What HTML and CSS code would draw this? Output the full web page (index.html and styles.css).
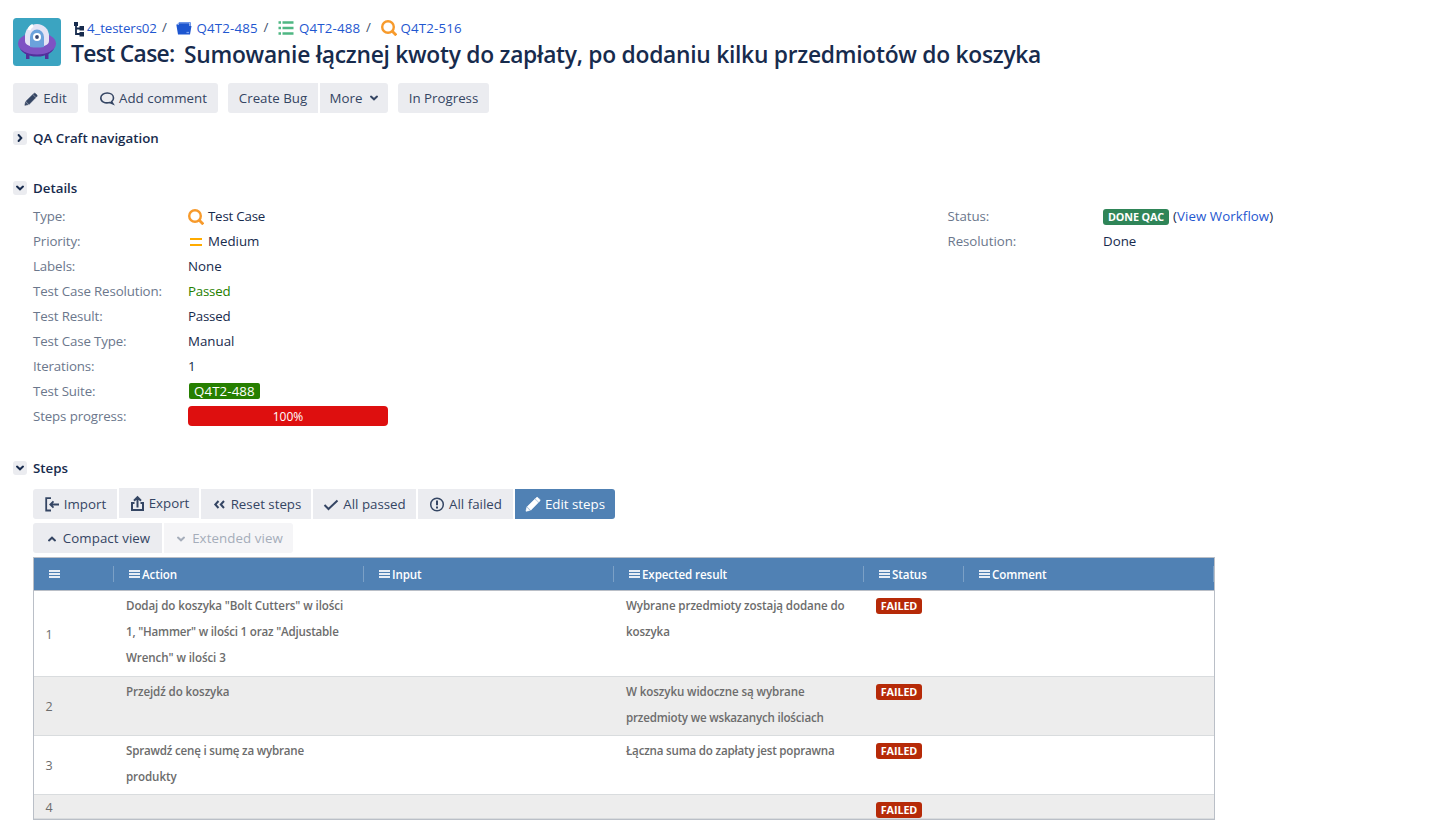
FILE: index.html
```html
<!DOCTYPE html>
<html lang="pl">
<head>
<meta charset="utf-8">
<title>Q4T2-516</title>
<link rel="stylesheet" href="styles.css">
</head>
<body>
<svg class="defs" width="0" height="0">
  <symbol id="search" viewBox="0 0 16 16"><circle cx="7" cy="7" r="5.800" fill="none" stroke="#f79a2b" stroke-width="2.400"/><path d="M11 11l4.300 4.300" stroke="#f79a2b" stroke-width="2.800"/></symbol>
  <symbol id="pencil" viewBox="0 0 16 16"><path d="M1 15.200l.8-3.700 2.900 2.900zM2.200 10.700l7.600-7.500 3.400 3.400-7.500 7.600zM10.300 2.700l1-1q.9-.7 1.700 0l1.700 1.700q.7.900 0 1.700l-1 1z" fill="currentColor" stroke="currentColor" stroke-width=".7"/></symbol>
  <symbol id="down" viewBox="0 0 10 10"><path d="M2 3.600L5 6.300l3-2.700" fill="none" stroke="currentColor" stroke-width="2" stroke-linecap="round"/></symbol>
  <symbol id="bars" viewBox="0 0 11 9"><path d="M0 1h11M0 4h11M0 7h11" stroke="currentColor" stroke-width="2"/></symbol>
</svg>
<header class="top">
  <svg class="avatar" viewBox="0 0 48 48">
    <rect width="48" height="48" rx="3.5" fill="#3ba4c1"/>
    <path d="M13 34h3.500v7H13zM32 34h3.500v7H32z" fill="#52309b"/>
    <ellipse cx="24" cy="28" rx="17.500" ry="10.500" fill="#52309b"/>
    <ellipse cx="24" cy="25.500" rx="19" ry="11" fill="#7e53c3"/>
    <path d="M12 18a12 12 0 0 1 24 0v5c0 8-24 8-24 0z" fill="#e4e3f5"/>
    <path d="M17 29V19a7 7.500 0 0 1 14 0v10q-7 1-14 0z" fill="#6ba2dc"/>
    <path d="M16 12q1-3.500 4-4.500" fill="none" stroke="#fff" stroke-width="3"/>
    <circle cx="24" cy="19" r="4" fill="#fff"/>
    <circle cx="24" cy="19" r="1.900" fill="#3b4770"/>
  </svg>
  <div class="heading">
    <nav class="crumbs">
      <svg class="ic-tree" viewBox="0 0 12 16"><path d="M3 2v11h5M3 7.500h5" fill="none" stroke="#172b4d" stroke-width="1.800"/><path d="M1 1h4v4H1zM6.500 5H11v4.500H6.500zM6.500 11H11v4.500H6.500z" fill="#172b4d"/></svg>
      <a class="c1">4_testers02</a><span class="sep">/</span>
      <svg class="ic-folder" viewBox="0 0 16 16"><path d="M1.500 4.500l1.500-2h11.500V7" fill="none" stroke="#6d96e8"/><path d="M3 3.200h10.500V6H3z" fill="#1d56d0"/><path d="M.3 4.500h5.500L7.300 6h8.200L14 14.500H2z" fill="#1d56d0"/><path d="M10.500 12.500h2.500" stroke="#7fa4f0" stroke-width="1.300"/></svg>
      <a class="c2">Q4T2-485</a><span class="sep">/</span>
      <svg class="ic-list" viewBox="0 0 16 14"><path d="M4.500 1.500h11M4.500 7h11M4.500 12.500h11M.5 1.500H3M.5 7H3M.5 12.500H3" stroke="#4fb783" stroke-width="2.600"/></svg>
      <a class="c3">Q4T2-488</a><span class="sep">/</span>
      <svg class="ic-find"><use href="#search"/></svg>
      <a class="c4">Q4T2-516</a>
    </nav>
    <h1><span class="kind">Test Case:</span><span class="name">Sumowanie łącznej kwoty do zapłaty, po dodaniu kilku przedmiotów do koszyka</span></h1>
  </div>
</header>

<div class="toolbar">
  <button class="btn round edit"><svg class="i14"><use href="#pencil"/></svg><span>Edit</span></button>
  <button class="btn round comment"><svg class="i16" viewBox="0 0 16 16"><path d="M10.800 12.500c-5 1.300-9-.8-9-4.500C1.800 5 4.700 3 8.200 3s6.300 2 6.300 5c0 1.600-.7 2.800-1.900 3.700l1.300 2.100z" fill="none" stroke="currentColor" stroke-width="1.600"/></svg><span>Add comment</span></button>
  <div class="group"><button class="btn first bug"><span>Create Bug</span></button><button class="btn last more"><span>More</span><svg class="i10"><use href="#down"/></svg></button></div>
  <button class="btn round progress-btn"><span>In Progress</span></button>
</div>

<section class="nav-section">
  <h2><i class="toggle"><svg class="i10 right"><use href="#down"/></svg></i><span class="h-nav">QA Craft navigation</span></h2>
</section>

<section class="details">
  <h2><i class="toggle"><svg class="i10"><use href="#down"/></svg></i><span>Details</span></h2>
  <div class="cols">
    <dl class="left">
      <dt>Type:</dt><dd><svg class="i16 gap"><use href="#search"/></svg><span class="tight">Test Case</span></dd>
      <dt>Priority:</dt><dd><svg class="i16 gap" viewBox="0 0 16 16"><path d="M2 5h12M2 11h12" stroke="#ffab00" stroke-width="2"/></svg>Medium</dd>
      <dt>Labels:</dt><dd>None</dd>
      <dt>Test Case Resolution:</dt><dd class="green tight">Passed</dd>
      <dt>Test Result:</dt><dd class="tight">Passed</dd>
      <dt>Test Case Type:</dt><dd>Manual</dd>
      <dt>Iterations:</dt><dd>1</dd>
      <dt>Test Suite:</dt><dd><span class="suite">Q4T2-488</span></dd>
      <dt>Steps progress:</dt><dd><span class="bar">100%</span></dd>
    </dl>
    <dl class="rightcol">
      <dt>Status:</dt><dd><span class="badge done">DONE QAC</span><span class="wf">(<a>View Workflow</a>)</span></dd>
      <dt>Resolution:</dt><dd>Done</dd>
    </dl>
  </div>
</section>

<section class="steps">
  <h2><i class="toggle"><svg class="i10"><use href="#down"/></svg></i><span>Steps</span></h2>
  <div class="step-tools">
    <button class="btn first import"><svg class="i16" viewBox="0 0 16 16"><path d="M7 2.200H2.200v12.300H7M15 8.500H6.500M9.500 5.300L6.300 8.500l3.200 3.200" fill="none" stroke="currentColor" stroke-width="1.800"/></svg><span>Import</span></button>
    <button class="btn export"><svg class="i16" viewBox="0 0 16 16"><path d="M5.500 8H3v7h11V8h-2.500M8.500 12.500V2.500M5 5.700l3.500-3.500L12 5.700" fill="none" stroke="currentColor" stroke-width="2"/></svg><span>Export</span></button>
    <button class="btn reset"><svg class="i16" viewBox="0 0 16 16"><path d="M7.500 5L4.300 8.500 7.500 12M13 5L9.800 8.500 13 12" fill="none" stroke="currentColor" stroke-width="2"/></svg><span>Reset steps</span></button>
    <button class="btn passed"><svg class="i16" viewBox="0 0 16 16"><path d="M1.500 9l4 4 9-8.500" fill="none" stroke="currentColor" stroke-width="2"/></svg><span>All passed</span></button>
    <button class="btn failed"><svg class="i16" viewBox="0 0 16 16"><circle cx="8" cy="8.500" r="6.300" fill="none" stroke="currentColor" stroke-width="1.500"/><path d="M8 4.500v4.800M8 10.500v2" stroke="currentColor" stroke-width="2"/></svg><span>All failed</span></button>
    <button class="btn last primary"><svg class="i16"><use href="#pencil"/></svg><span>Edit steps</span></button>
  </div>
  <div class="view-tools">
    <button class="btn first view"><svg class="i10 up"><use href="#down"/></svg><span>Compact view</span></button>
    <button class="btn last view disabled"><svg class="i10"><use href="#down"/></svg><span>Extended view</span></button>
  </div>
  <div class="grid">
    <div class="row head">
      <div><svg class="bars"><use href="#bars"/></svg></div>
      <div><svg class="bars"><use href="#bars"/></svg><span>Action</span></div>
      <div><svg class="bars"><use href="#bars"/></svg><span>Input</span></div>
      <div><svg class="bars"><use href="#bars"/></svg><span>Expected result</span></div>
      <div><svg class="bars"><use href="#bars"/></svg><span>Status</span></div>
      <div><svg class="bars"><use href="#bars"/></svg><span>Comment</span></div>
    </div>
    <div class="row r1"><div class="num">1</div><div>Dodaj do koszyka "Bolt Cutters" w ilości<br><span class="tight">1, "Hammer" w ilości 1 oraz "Adjustable</span><br>Wrench" w ilości 3</div><div></div><div>Wybrane przedmioty zostają dodane do<br>koszyka</div><div><span class="badge fail">FAILED</span></div><div></div></div>
    <div class="row r2 alt"><div class="num">2</div><div>Przejdź do koszyka</div><div></div><div>W koszyku widoczne są wybrane<br><span class="tight">przedmioty we wskazanych ilościach</span></div><div><span class="badge fail">FAILED</span></div><div></div></div>
    <div class="row r2"><div class="num">3</div><div><span class="tight">Sprawdź cenę i sumę za wybrane</span><br>produkty</div><div></div><div><span class="tight">Łączna suma do zapłaty jest poprawna</span></div><div><span class="badge fail">FAILED</span></div><div></div></div>
    <div class="row r4 alt"><div class="num">4</div><div></div><div></div><div></div><div><span class="badge fail">FAILED</span></div><div></div></div>
  </div>
</section>
</body>
</html>
```
FILE: styles.css
```css
* { box-sizing: border-box; }
body { margin: 0; padding: 18px 13px 0; height: 822px; overflow: hidden; background: #fff; color: #172b4d; font: 13.3px/20px "Open Sans", "Noto Sans", sans-serif; }
.defs { display: block; height: 0; }
svg { flex: none; }
a { color: #1f57d0; }
h1, h2, dl, dd { margin: 0; }
.top { display: flex; height: 48px; }
.avatar { width: 48px; height: 48px; }
.heading { padding-left: 10px; }
.crumbs { display: flex; height: 20px; align-items: center; white-space: nowrap; }
.crumbs a { display: block; width: 62px; letter-spacing: .15px; }
.crumbs a.c1 { width: 70px; letter-spacing: -.12px; }
.sep { width: 6px; margin: -3px 8.5px 0 5px; color: #42526e; }
.crumbs svg { width: 16px; height: 16px; }
.crumbs .ic-tree { width: 12px; margin: 1px 2px 0 2px; }
.crumbs .ic-folder { margin-left: -1px; margin-right: 5px; }
.crumbs .ic-find { margin-right: 4px; }
.crumbs .ic-list { height: 14px; margin-right: 5px; }
h1 { display: flex; height: 32px; font-size: 22.8px; line-height: 32px; font-weight: 600; white-space: nowrap; }
.kind { width: 113px; letter-spacing: -.65px; }
.name { margin-top: 1px; letter-spacing: -.27px; }
.toolbar { display: flex; gap: 10px; margin-top: 17px; }
.btn { display: flex; align-items: center; justify-content: center; gap: 4px; height: 30px; padding: 0; border: 0; background: #ebecf0; color: #344563; font: inherit; line-height: 30px; white-space: nowrap; }
.round { border-radius: 3px; }
.first { border-radius: 3px 0 0 3px; }
.last { border-radius: 0 3px 3px 0; }
.group, .step-tools, .view-tools { display: flex; gap: 2px; }
.i16 { width: 16px; height: 16px; }
.i14 { width: 14px; height: 14px; margin-top: 2px; }
.i10 { width: 10px; height: 10px; }
.edit { width: 65px; gap: 5px; }
.comment { width: 130px; letter-spacing: .05px; }
.bug { width: 90px; }
.more { width: 68px; gap: 7px; }
.more svg { margin-right: -1px; }
.progress-btn { width: 91px; }
h2 { display: flex; align-items: center; gap: 6px; height: 20px; font-size: 13.3px; line-height: 20px; font-weight: 600; }
.toggle { display: flex; align-items: center; justify-content: center; width: 14px; height: 14px; border-radius: 3px; background: #ebecf0; }
.right { transform: rotate(-90deg); }
.up { transform: rotate(180deg); }
.nav-section { margin-top: 15px; }
.details { margin-top: 30px; }
.cols { display: grid; grid-template-columns: 914.5px 1fr; padding: 6px 0 0 20px; }
dl { display: grid; grid-template-columns: 155px 1fr; grid-auto-rows: 25px; align-content: start; line-height: 25px; white-space: nowrap; }
.rightcol { grid-template-columns: 155.5px 1fr; }
dt { color: #6b778c; letter-spacing: -.13px; }
.rightcol dt { letter-spacing: -.05px; }
dd { display: flex; align-items: center; }
.tight { letter-spacing: -.2px; }
.gap { margin-right: 4px; }
.green { color: #267f00; }
.suite { height: 16px; margin: -1px 0 0 1px; padding: 0 5px; border-radius: 2px; background: #267f00; color: #fff; line-height: 16px; letter-spacing: .1px; }
.bar { width: 200px; height: 20px; margin-top: -1px; border-radius: 4px; background: #de0f0f; color: #fff; font-size: 12px; line-height: 21px; text-align: center; }
.badge { display: block; height: 16px; border-radius: 3px; color: #fff; font-size: 10.8px; line-height: 16px; font-weight: 700; letter-spacing: -.12px; text-align: center; white-space: nowrap; }
.done { width: 66px; margin-right: 4px; background: #2f8558; }
.wf { letter-spacing: .07px; }
.fail { width: 46px; margin-top: 5px; background: #b62a08; }
.steps { margin-top: 29px; }
.step-tools { padding: 11px 0 0 20px; }
.view-tools { padding: 4px 0 0 20px; }
.import { width: 84px; }
.export { width: 80px; margin-top: -1px; }
.reset { width: 110px; }
.passed { width: 103px; }
.failed { width: 95px; }
.primary { width: 100px; background: #5081b4; color: #fff; }
.view { width: 129px; gap: 6px; padding-left: 2px; letter-spacing: .08px; }
.view svg { margin-top: 1px; }
.disabled { background: #f5f5f7; color: #a5adba; }
.grid { width: 1182px; margin: 4px 0 0 20px; border: 1px solid #babfc7; color: #6c6c6c; font-size: 11.6px; font-weight: 600; line-height: 26px; letter-spacing: -.1px; }
.row { display: grid; grid-template-columns: 80px 250px 250px 250px 100px 250px; border-bottom: 1px solid #d9dcde; }
.row > div { padding: 2px 0 0 12px; white-space: nowrap; }
.row > .num { padding: 1px 0 0 11.5px; align-self: center; font-size: 12.5px; font-weight: 500; }
.row.r4 > .num { padding-top: 0; }
.alt { background: #ededed; }
.r1 { height: 86px; }
.r2 { height: 59px; }
.r4 { height: 24px; }
.r1 > .num { padding-top: 2px; }
.head { height: 33px; align-items: center; border-color: #babfc7; background: #5081b4; color: #fff; }
.head > div { display: flex; align-items: center; gap: 2px; height: 16px; padding: 0 0 0 15px; border-right: 1px solid #7ba0c6; line-height: 16px; }
.head span { margin-top: 2px; }
.bars { width: 11px; height: 9px; color: #e8eef6; }
```
